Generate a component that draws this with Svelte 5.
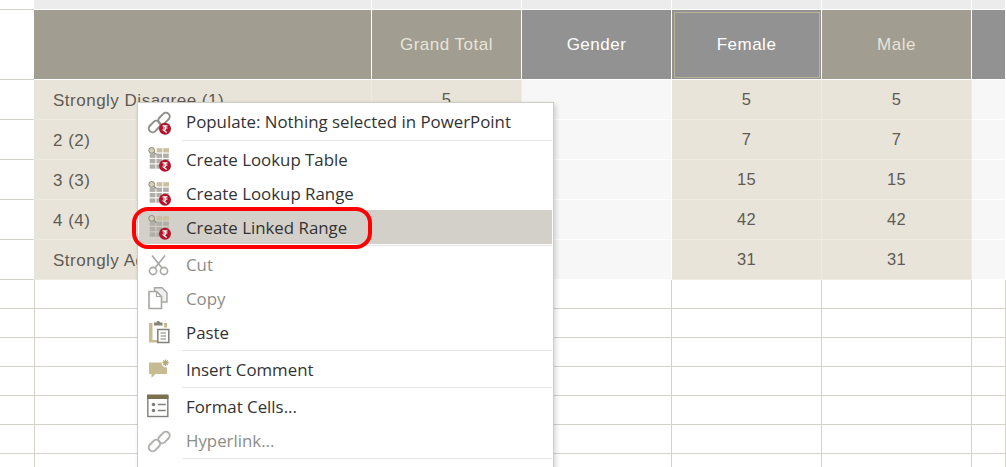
<script>
  const headers = [
    { label: '', cls: 'tan' },
    { label: 'Grand Total', cls: 'tan' },
    { label: 'Gender', cls: 'gray' },
    { label: 'Female', cls: 'gray selected' },
    { label: 'Male', cls: 'tan' },
    { label: '', cls: 'gray' }
  ];
  const rows = [
    ['Strongly Disagree (1)', 5, 5, 5],
    ['2 (2)', 7, 7, 7],
    ['3 (3)', 15, 15, 15],
    ['4 (4)', 42, 42, 42],
    ['Strongly Agree (5)', 31, 31, 31]
  ];
  const blanks = [0, 1, 2, 3, 4, 5, 6];
  const gridCols = [0, 1, 2, 3, 4, 5];
  // magnifier sits in the first cell, so the top row only has two
  const lookupGray = [1, 2, 3].flatMap((r) => [0, 1, 2].map((c) => [c, r]));
</script>

{#snippet badge()}
  <circle cx="17" cy="18.700" r="6" fill="#b3142c" />
  <path d="M14.500 15.800h5M15 18h4.500M15.500 15.800c3 0 3 4.200 0 4.200l3.200 2.500" fill="none" stroke="#fff" stroke-width="1.200" />
{/snippet}

{#snippet chain(color)}
  <g fill="none" stroke={color} stroke-width="2">
    <rect x="12.200" y="2" width="7.600" height="13" rx="3.800" transform="rotate(45 16 8.500)" />
    <rect x="2.700" y="10" width="7.600" height="13" rx="3.800" transform="rotate(45 6.500 16.500)" />
  </g>
{/snippet}

{#snippet lookup()}
  <rect x="8.700" y="1.200" width="5.700" height="4.300" fill="#c9c0a0" />
  <rect x="15.300" y="1.200" width="5.700" height="4.300" fill="#c9c0a0" />
  <g fill="#b0aea8">
    {#each lookupGray as [c, r]}
      <rect x={1.700 + c * 6.700} y={1.200 + r * 5.400} width="5.700" height="4.300" />
    {/each}
  </g>
  <circle cx="3.700" cy="3.400" r="2.900" fill="#d8d0b4" stroke="#85857f" stroke-width="1" />
  <path d="M5.800 5.500l2.800 1.900" stroke="#85857f" stroke-width="1.200" />
{/snippet}

<div class="sheet">
  <div class="cell rowhead top"></div>
  {#each headers as _h}
    <div class="cell top"></div>
  {/each}

  <div class="cell rowhead"></div>
  {#each headers as h}
    <div class="cell head {h.cls}"><span>{h.label}</span></div>
  {/each}

  {#each rows as r}
    <div class="cell rowhead"></div>
    <div class="cell data label">{r[0]}</div>
    <div class="cell data num">{r[1]}</div>
    <div class="cell pale"></div>
    <div class="cell data num">{r[2]}</div>
    <div class="cell data num">{r[3]}</div>
    <div class="cell pale"></div>
  {/each}

  {#each blanks as _b}
    <div class="cell rowhead"></div>
    {#each gridCols as c}
      <div class="cell blank" class:leftmost={c === 0}></div>
    {/each}
  {/each}
</div>

<div class="menu">
  <div class="item">
    <svg class="ico" viewBox="0 0 25 25">{@render chain('#8f8f8b')}{@render badge()}</svg>
    <span>Populate: Nothing selected in PowerPoint</span>
  </div>
  <div class="sep first"></div>
  <div class="item lk"><svg class="ico" viewBox="0 0 25 25">{@render lookup()}{@render badge()}</svg><span>Create Lookup Table</span></div>
  <div class="item lk"><svg class="ico" viewBox="0 0 25 25">{@render lookup()}{@render badge()}</svg><span>Create Lookup Range</span></div>
  <div class="item lk hot"><svg class="ico" viewBox="0 0 25 25">{@render lookup()}{@render badge()}</svg><span>Create Linked Range</span></div>
  <div class="sep first"></div>
  <div class="item off">
    <svg class="ico" viewBox="0 0 25 25">
      <g fill="none" stroke="#a6a6a2" stroke-width="1.600">
        <circle cx="5" cy="18" r="3.600" />
        <circle cx="16" cy="18" r="3.600" />
        <path d="M7 15L17 2.500M14 15L4 2.500" />
      </g>
    </svg>
    <span>Cut</span>
  </div>
  <div class="item off">
    <svg class="ico" viewBox="0 0 25 25">
      <path d="M6.500 4V.800h7.500l5 5V15h-6" fill="#eee" stroke="#a6a6a2" stroke-width="1.400" />
      <path d="M1 4.500h7.500l5 5v12H1z" fill="#fff" stroke="#a6a6a2" stroke-width="1.600" />
      <path d="M8.500 4.500v5h5" fill="none" stroke="#a6a6a2" stroke-width="1.200" />
    </svg>
    <span>Copy</span>
  </div>
  <div class="item">
    <svg class="ico" viewBox="0 0 25 25">
      <path d="M1 2h3.500v17h5v2.500H1z" fill="#c7bb92" />
      <path d="M6 1.500h2.500c.5-2 3-2 3.500 0h2.500v3H6z" fill="#85827a" />
      <rect x="16" y="2" width="3" height="4.500" fill="#c7bb92" />
      <rect x="9.800" y="8.500" width="11" height="13" fill="#fff" stroke="#7f7f7b" stroke-width="1.500" />
      <path d="M12.500 12h5.500M12.500 15h5.500M12.500 18h5.500" stroke="#7f7f7b" stroke-width="1.200" />
    </svg>
    <span>Paste</span>
  </div>
  <div class="sep"></div>
  <div class="item">
    <svg class="ico" viewBox="0 0 25 25">
      <path d="M1 4.500h12.500a5 5 0 0 0 5.500 5V16H7.500L3.500 20v-4H1z" fill="#c7bb92" />
      <path d="M17.500 1.500v6.500M14.300 4.700h6.500M15.300 2.500l4.500 4.500M19.800 2.500l-4.500 4.500" stroke="#b5a77c" stroke-width="1.200" />
    </svg>
    <span>Insert Comment</span>
  </div>
  <div class="sep"></div>
  <div class="item">
    <svg class="ico" viewBox="0 0 25 25">
      <rect x="-.200" y="1.500" width="20" height="20" fill="#fff" stroke="#7f7f7b" stroke-width="1.400" />
      <rect x="-1" y="-.500" width="21.500" height="4.500" fill="#7a6f4e" />
      <circle cx="5.500" cy="9.500" r="1.800" fill="#7f7f7b" />
      <circle cx="5.500" cy="15.500" r="1.800" fill="#7f7f7b" />
      <path d="M9.800 9.500h8M9.800 15.500h8" stroke="#7f7f7b" stroke-width="1.400" />
    </svg>
    <span>Format Cells...</span>
  </div>
  <div class="item off"><svg class="ico" viewBox="0 0 25 25">{@render chain('#b0b0ac')}</svg><span>Hyperlink...</span></div>
  <div class="sep"></div>
</div>

<div class="callout"></div>

<style>
  :global(body) {
    margin: 0;
    background: #fff;
    overflow: hidden;
  }

  .sheet {
    display: grid;
    grid-template-columns: 34px 338px 150px 150px 150px 150px 34px;
    grid-template-rows: 10px 70px repeat(5, 40px) repeat(7, 29px);
    width: 1006px;
    height: 467px;
    overflow: hidden;
    font-family: 'Liberation Sans', Arial, sans-serif;
    font-size: 17px;
    letter-spacing: 0.5px;
    color: #5f5b55;
  }

  .cell {
    box-sizing: border-box;
    display: flex;
    align-items: center;
    justify-content: center;
    min-width: 0;
    white-space: nowrap;
  }

  .top {
    background: #ececec;
    border-right: 1px solid #fff;
    border-bottom: 1px solid #fff;
  }

  .cell.rowhead {
    background: #fff;
    border: 0;
    border-bottom: 1px solid #d4d2cb;
  }

  .head {
    border-right: 1px solid #fff;
    border-bottom: 1px solid #fff;
  }

  .tan {
    background: #a19d90;
    color: #e8e4d9;
  }

  .gray {
    background: #929292;
    color: #fff;
  }

  .selected {
    outline: 1px solid #b9b396;
    outline-offset: -3px;
  }

  .data {
    background: #e8e4d9;
    border-right: 1px solid #eeebe3;
    border-bottom: 1px solid #eeebe3;
  }

  .num {
    font-size: 16.500px;
    letter-spacing: 0.3px;
  }

  .label {
    justify-content: flex-start;
    padding: 2px 0 0 19px;
  }

  .pale {
    background: #f7f7f7;
    border-right: 1px solid #fff;
    border-bottom: 1px solid #fff;
  }

  .blank {
    background: #fff;
    border-right: 1px solid #d4d2cb;
    border-bottom: 1px solid #d4d2cb;
  }

  .leftmost {
    border-left: 1px solid #d4d2cb;
  }

  .menu {
    position: absolute;
    left: 137px;
    top: 102px;
    box-sizing: border-box;
    width: 417px;
    height: 380px;
    padding: 2px 1px 0 1px;
    background: #fff;
    border: 1px solid #cfccc4;
    box-shadow: 2px 2px 5px rgba(0, 0, 0, 0.16);
    font-family: 'Open Sans', 'Noto Sans', sans-serif;
    font-size: 16.850px;
    color: #333;
  }

  .item {
    display: flex;
    align-items: center;
    height: 34px;
    padding-left: 9px;
  }

  .item span {
    margin-left: 13px;
    padding-bottom: 2px;
  }

  .item.lk span {
    padding-bottom: 0;
  }

  .ico {
    flex: none;
    width: 25px;
    height: 25px;
    overflow: visible;
  }

  .hot {
    background: #d3d0c9;
  }

  .off {
    color: #8c8c88;
  }

  .sep {
    height: 1px;
    margin: 0 0 2px 43px;
    background: #e6e5e1;
  }

  .sep.first {
    margin-top: 1px;
    margin-bottom: 1px;
  }

  .hot + .sep {
    margin-bottom: 2px;
  }

  .callout {
    position: absolute;
    left: 132px;
    top: 207px;
    box-sizing: border-box;
    width: 240px;
    height: 42px;
    border: 4px solid #f00;
    border-radius: 16px;
  }
</style>
